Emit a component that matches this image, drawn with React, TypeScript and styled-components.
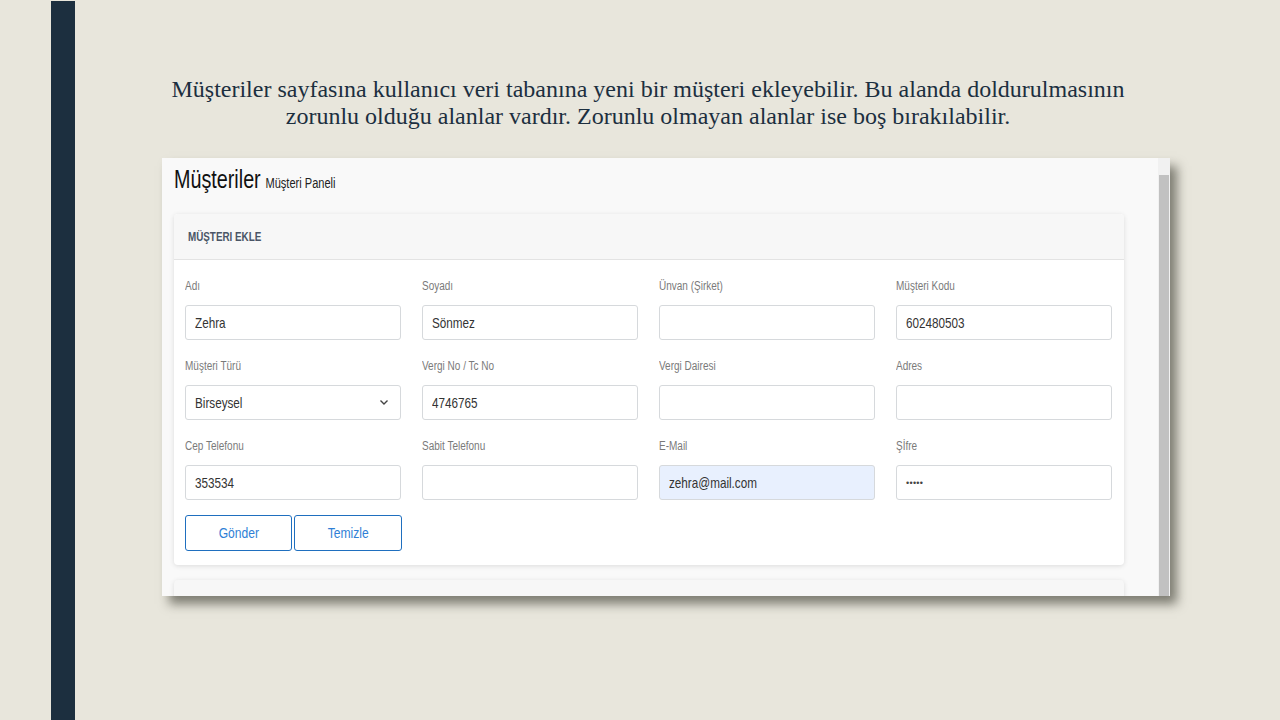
import React from "react";
import styled, { createGlobalStyle } from "styled-components";

const Global = createGlobalStyle`
  html, body { margin: 0; padding: 0; background: #e8e6dc; }
  body { width: 1280px; height: 720px; overflow: hidden; }
`;

const Page = styled.div`
  display: flex;
  height: 720px;
`;

const SideBar = styled.div`
  width: 24px;
  margin-left: 51px;
  margin-top: 1px;
  background: #1c2f3f;
`;

const Main = styled.div`
  display: flex;
  flex-direction: column;
  padding-left: 87px;
  padding-top: 76px;
`;

const Intro = styled.p`
  margin: 0;
  width: 972px;
  text-align: center;
  font-family: "Liberation Serif", "Times New Roman", serif;
  font-size: 24px;
  line-height: 27px;
  color: #1c2f3f;
  white-space: nowrap;
`;

const Frame = styled.div`
  margin-top: 28px;
  width: 1008px;
  height: 438px;
  display: flex;
  background: #f9f9f9;
  box-shadow: 7px 8px 10px rgba(40, 40, 30, 0.55);
  overflow: hidden;
`;

const Content = styled.div`
  flex: 1;
  min-width: 0;
  padding: 0 34px 0 12px;
  font-family: "Liberation Sans", Arial, sans-serif;
`;

const Scrollbar = styled.div`
  width: 12px;
  flex: none;
  display: flex;
  flex-direction: column;
  background: #f1f1f1;
  padding-right: 1px;
  box-sizing: border-box;
`;

const ScrollArrow = styled.div`
  height: 17px;
`;

const ScrollThumb = styled.div`
  flex: 1;
  margin-left: 1px;
  background: #c1c1c1;
`;

/* the source screenshot was horizontally compressed: text is drawn narrow */
const Narrow = styled.span<{ $k?: number; $center?: boolean }>`
  display: inline-block;
  white-space: nowrap;
  transform: scaleX(${(p) => p.$k ?? 0.8});
  transform-origin: ${(p) => (p.$center ? "center" : "left")} center;
`;

const TitleRow = styled.div`
  height: 56px;
  padding-top: 7px;
  box-sizing: border-box;
  color: #111;
`;

const Title = styled.span`
  font-size: 25px;
  margin-right: 6px;
`;

const SubTitle = styled.span`
  font-size: 14px;
  color: #222;
`;

const Card = styled.div`
  background: #fff;
  border-radius: 4px;
  box-shadow: 0 1px 5px rgba(0, 0, 0, 0.12);
  margin-bottom: 15px;
`;

const CardHeader = styled.div`
  height: 45px;
  display: flex;
  align-items: center;
  padding-left: 14px;
  background: #f7f7f7;
  border-bottom: 1px solid #e3e3e3;
  border-radius: 4px 4px 0 0;
  font-size: 12px;
  font-weight: bold;
  color: #4a5566;
`;

const CardBody = styled.div`
  padding: 19px 12px 14px 11px;
`;

const Grid = styled.div`
  display: grid;
  grid-template-columns: repeat(4, 216px);
  column-gap: 21px;
  row-gap: 19px;
`;

const Field = styled.div`
  display: flex;
  flex-direction: column;
`;

const Label = styled.label`
  font-size: 12.5px;
  line-height: 14px;
  color: #7a7a7a;
  margin-bottom: 12px;
`;

const Input = styled.div<{ $filled?: boolean }>`
  height: 35px;
  box-sizing: border-box;
  border: 1px solid #d6d9dc;
  border-radius: 3px;
  background: ${(p) => (p.$filled ? "#e8f0fe" : "#fff")};
  display: flex;
  align-items: center;
  justify-content: space-between;
  padding: 0 11px 0 9px;
  font-size: 15px;
  color: #333;
`;

const Dots = styled.span`
  font-size: 9px;
  letter-spacing: 0.3px;
  color: #444;
`;

const Buttons = styled.div`
  display: flex;
  gap: 2px;
  margin-top: 15px;
`;

const Button = styled.button<{ $w: number }>`
  width: ${(p) => p.$w}px;
  height: 36px;
  background: #fff;
  border: 1px solid #1f6fbf;
  border-radius: 3px;
  color: #2f7fd6;
  font-family: inherit;
  font-size: 15.5px;
  padding: 0;
`;

const NextCard = styled(Card)`
  height: 60px;
  background: #f7f7f7;
`;

const Chevron = () => (
  <svg width="10" height="7" viewBox="0 0 10 7" fill="none">
    <path d="M1.5 1.5 L5 5 L8.5 1.5" stroke="#444" strokeWidth="1.4" />
  </svg>
);

type F = { label: string; value?: string; filled?: boolean; select?: boolean; password?: boolean };

const fields: F[] = [
  { label: "Adı", value: "Zehra" },
  { label: "Soyadı", value: "Sönmez" },
  { label: "Ünvan (Şirket)" },
  { label: "Müşteri Kodu", value: "602480503" },
  { label: "Müşteri Türü", value: "Birseysel", select: true },
  { label: "Vergi No / Tc No", value: "4746765" },
  { label: "Vergi Dairesi" },
  { label: "Adres" },
  { label: "Cep Telefonu", value: "353534" },
  { label: "Sabit Telefonu" },
  { label: "E-Mail", value: "zehra@mail.com", filled: true },
  { label: "Şİfre", password: true },
];

export default function App() {
  return (
    <>
      <Global />
      <Page>
        <SideBar />
        <Main>
          <Intro>
            Müşteriler sayfasına kullanıcı veri tabanına yeni bir müşteri ekleyebilir. Bu alanda doldurulmasının
            <br />
            zorunlu olduğu alanlar vardır. Zorunlu olmayan alanlar ise boş bırakılabilir.
          </Intro>
          <Frame>
            <Content>
              <TitleRow>
                <Narrow $k={0.79}>
                  <Title>Müşteriler</Title>
                  <SubTitle>Müşteri Paneli</SubTitle>
                </Narrow>
              </TitleRow>
              <Card>
                <CardHeader>
                  <Narrow $k={0.82}>MÜŞTERI EKLE</Narrow>
                </CardHeader>
                <CardBody>
                  <Grid>
                    {fields.map((f) => (
                      <Field key={f.label}>
                        <Label>
                          <Narrow $k={0.8}>{f.label}</Narrow>
                        </Label>
                        <Input $filled={f.filled}>
                          {f.password ? (
                            <Dots>•••••</Dots>
                          ) : (
                            <Narrow $k={0.78}>{f.value ?? ""}</Narrow>
                          )}
                          {f.select && <Chevron />}
                        </Input>
                      </Field>
                    ))}
                  </Grid>
                  <Buttons>
                    <Button $w={107}>
                      <Narrow $k={0.78} $center>Gönder</Narrow>
                    </Button>
                    <Button $w={108}>
                      <Narrow $k={0.78} $center>Temizle</Narrow>
                    </Button>
                  </Buttons>
                </CardBody>
              </Card>
              <NextCard />
            </Content>
            <Scrollbar>
              <ScrollArrow />
              <ScrollThumb />
            </Scrollbar>
          </Frame>
        </Main>
      </Page>
    </>
  );
}
